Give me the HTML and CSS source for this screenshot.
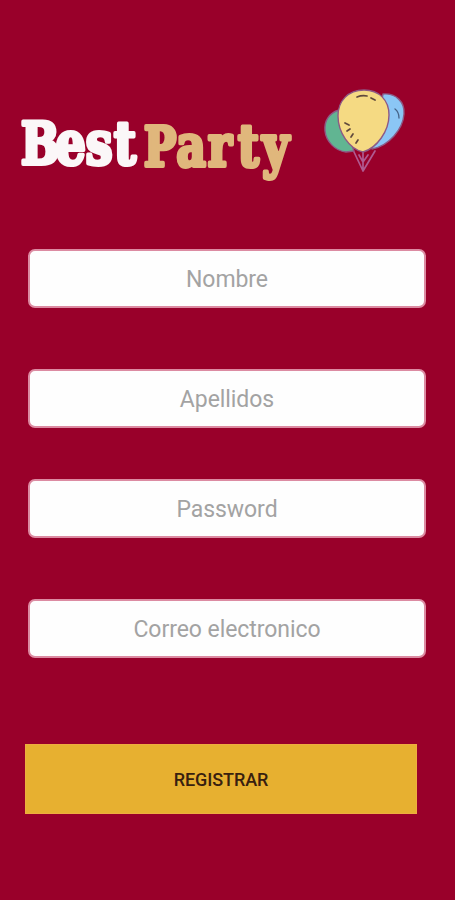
FILE: index.html
```
<!DOCTYPE html>
<html lang="es">
<head>
<meta charset="utf-8">
<title>BestParty</title>
<link rel="stylesheet" href="styles.css">
</head>
<body>
<main class="screen">
  <header class="brand">
    <svg class="wordmark" viewBox="16 110 284 80" role="img" aria-label="BestParty">
      <g transform="scale(.88 1)">
        <text class="best" y="164.5" x="24 63 97.5 129.5"><tspan font-size="57">B</tspan><tspan font-size="60">es</tspan><tspan font-size="60">t</tspan></text>
        <text class="party" y="166" x="163.5 200.5 236.5 270.5 298"><tspan font-size="54">P</tspan><tspan font-size="57">ar</tspan><tspan font-size="57">t</tspan><tspan font-size="58">y</tspan></text>
      </g>
    </svg>
    <svg class="balloons" viewBox="0 0 110 100" aria-hidden="true">
      <g stroke="#8d5a85" stroke-width="1.4" stroke-linejoin="round" stroke-linecap="round">
        <path fill="#61b592" d="M29 30C19 33 14 41 15 51C16 61 25 71 36 72L44 71Z"/>
        <path fill="#8bc6f5" d="M73 14C86 13 95 22 94 34C93 49 79 66 62 69Z"/>
        <path fill="none" stroke="#b05a91" stroke-width="1.7" d="M44 72L53 91L65 71M53 72V91M49 75L53 82L58 75"/>
        <path fill="#f5da83" d="M54 10C38 10 28 21 28 36C28 52 39 69 53 72C67 68 79 51 79 35C79 20 69 10 54 10Z"/>
      </g>
      <g fill="none" stroke="#60493c" stroke-width="1.7" stroke-linecap="round">
        <path d="M47 17Q52 15 57 16M61 18L65 20"/>
        <path d="M35 43L39 45M37 51L40 49M41 57L43 54M46 63L48 60"/>
        <path stroke="#456387" stroke-width="1.3" d="M85 29Q89 32 89 38"/>
      </g>
    </svg>
  </header>
  <form class="form">
    <input class="field" type="text" placeholder="Nombre" aria-label="Nombre">
    <input class="field field-surname" type="text" placeholder="Apellidos" aria-label="Apellidos">
    <input class="field field-password" type="password" placeholder="Password" aria-label="Password">
    <input class="field field-email" type="email" placeholder="Correo electronico" aria-label="Correo electronico">
    <button class="submit" type="button">REGISTRAR</button>
  </form>
</main>
</body>
</html>
```
FILE: styles.css
```
* { box-sizing: border-box; }
body { margin: 0; background: #99002a; font-family: Roboto, sans-serif; }
.screen { width: 455px; height: 900px; padding-top: 80px; overflow: hidden; }
.brand { display: flex; align-items: flex-start; height: 169px; padding-left: 16px; }
.wordmark { width: 284px; height: 80px; margin-top: 30px; flex: none; overflow: visible; }
.wordmark text { font-family: "DejaVu Serif Condensed", "DejaVu Serif", serif; font-weight: 700; font-stretch: condensed; stroke-width: 4px; stroke-linejoin: round; }
.best { fill: #fbf7f8; stroke: #fbf7f8; }
.party { fill: #e0b77c; stroke: #e0b77c; }
.balloons { width: 110px; height: 100px; margin-left: 10px; flex: none; }
.form { display: flex; flex-direction: column; padding: 0 29px 0 28px; }
.field { display: block; width: 398px; height: 59px; margin: 0; padding: 2px 0 0; border: 2px solid #dc8ba2; border-radius: 7px; background: #fefefe; color: #555; font: 400 23px/53px Roboto, sans-serif; letter-spacing: -.06px; text-align: center; outline: 0; }
.field::placeholder { color: #a3a3a3; opacity: 1; }
.field-surname { margin-top: 61px; }
.field-password { margin-top: 51px; }
.field-email { margin-top: 61px; }
.submit { width: 392px; height: 70px; margin: 86px 0 0 -3px; padding: 2px 0 0; border: 1px solid #efad40; background: #e7b030; color: #38200f; font: 500 18px/66px Roboto, sans-serif; letter-spacing: -.1px; text-align: center; }
```
